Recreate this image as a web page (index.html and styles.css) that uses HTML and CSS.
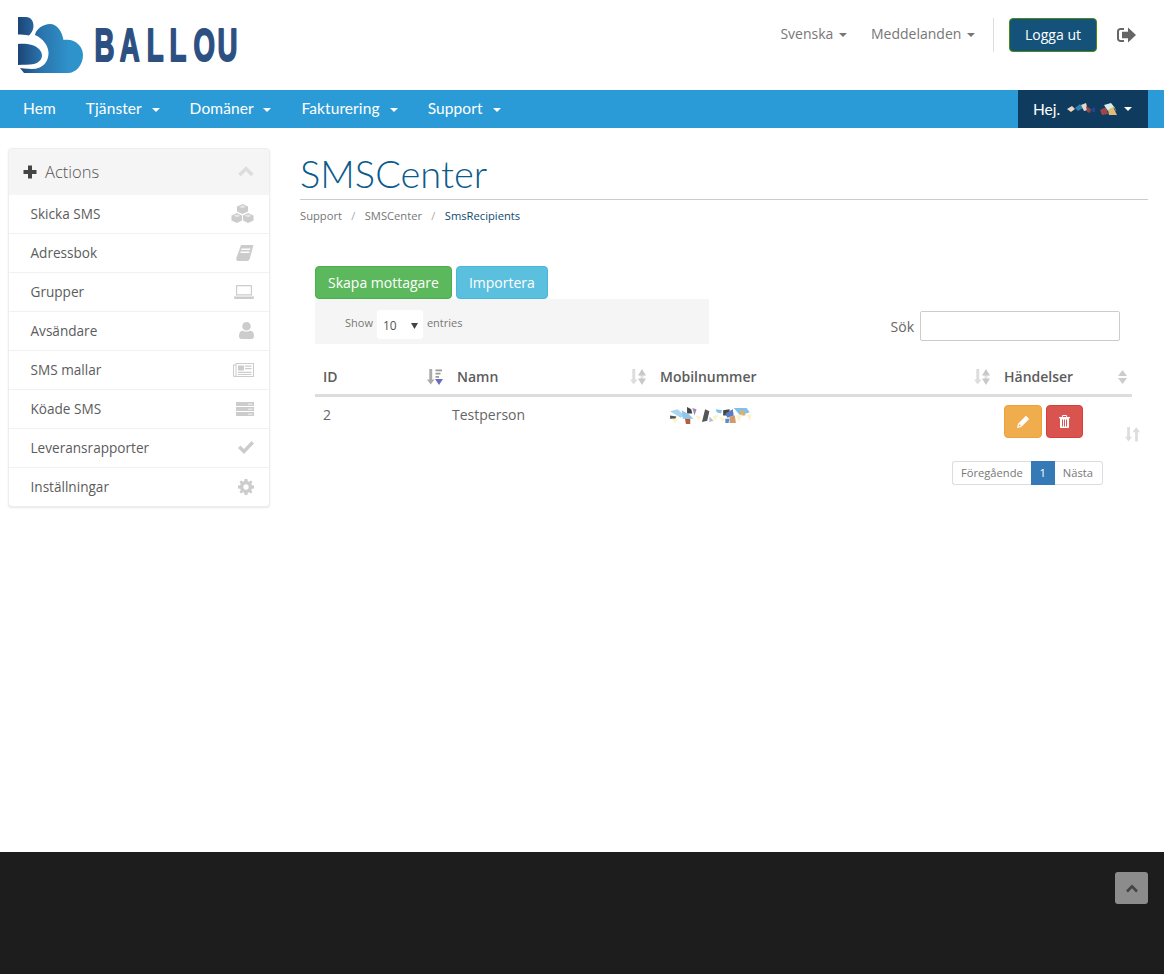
FILE: index.html
```html
<!DOCTYPE html>
<html lang="sv">
<head>
<meta charset="utf-8">
<title>SMSCenter</title>
<link rel="stylesheet" href="styles.css">
</head>
<body>
<header class="top">
  <a class="logo">
    <svg width="230" height="64" viewBox="0 0 230 64">
      <defs>
        <linearGradient id="lg" gradientUnits="userSpaceOnUse" x1="18" y1="0" x2="70" y2="0">
          <stop offset="0" stop-color="#1d4577"/><stop offset=".45" stop-color="#2a74ad"/><stop offset="1" stop-color="#2f93cb"/>
        </linearGradient>
      </defs>
      <g transform="translate(-16,-13)">
        <path fill="url(#lg)" d="M35 35C36 29 43 24 50 24C57 24 62 31 63.500 40C75 38 83 46 83 55C83 65 76 73 68 73H24L20 68L30 60Z"/>
        <path fill="#fff" d="M14 35H35C44 39 49 47 48.500 54C48 62 43 69 32 69C26 69 20 68 14 67Z"/>
        <path fill="url(#lg)" d="M18 17H26C31 17 33.500 21 33.500 26C33.500 30 31.500 33 29 35.500C25 34.800 21 34.500 18 34.500Z"/>
        <path fill="url(#lg)" d="M18 44C23 43.500 28 44 32 45C38 47 42 51 42 55.500C42 60 38 63 34 64C29 65 23 64.500 18 65Z"/>
      </g>
      <text class="logo-text" transform="translate(78.500,48) scale(.6,1)" x="0 42 87 125 165 205" y="0">BALLOU</text>
    </svg>
  </a>
  <nav class="top-nav">
    <a class="top-link">Svenska <i class="caret"></i></a>
    <a class="top-link">Meddelanden <i class="caret"></i></a>
    <span class="top-sep"></span>
    <a class="btn-logout">Logga ut</a>
    <svg class="signout" width="19" height="16" viewBox="0 0 19 16"><path fill="#666" d="M7 1V3H3.500C2.700 3 2 3.700 2 4.500V11.500C2 12.300 2.700 13 3.500 13H7V15H3.500C1.600 15 0 13.500 0 11.500V4.500C0 2.500 1.600 1 3.500 1ZM11 .5L19 8L11 15.500V11.300H5V4.700H11Z"/></svg>
  </nav>
</header>

<nav class="main-nav">
  <ul class="menu">
    <li>Hem</li>
    <li>Tjänster <i class="caret caret-w"></i></li>
    <li>Domäner <i class="caret caret-w"></i></li>
    <li>Fakturering <i class="caret caret-w"></i></li>
    <li>Support <i class="caret caret-w"></i></li>
  </ul>
  <div class="hello">
    <span>Hej.</span>
    <svg class="blur-a" width="52" height="14" viewBox="0 0 52 14">
      <polygon fill="#f0d6bd" points="0,7 5,4 8,7 4,10"/>
      <polygon fill="#2f7fb0" points="8,6 13,2 16,6 11,9"/>
      <polygon fill="#e8d8cc" points="14,3 19,1 21,8 17,9"/>
      <polygon fill="#8a4a4a" points="19,4 24,7 23,11 20,10"/>
      <polygon fill="#27418f" points="24,7 28,5 28,10 25,10"/>
      <polygon fill="#a0464a" points="33,8 39,5 41,12 35,13"/>
      <polygon fill="#d8eeea" points="37,3 44,1 48,6 41,9"/>
      <polygon fill="#e0bc78" points="41,8 46,5 50,13 42,13"/>
      <polygon fill="#777" points="46,5 49,7 49,10"/>
    </svg>
    <i class="caret caret-w"></i>
  </div>
</nav>

<main class="page">
  <aside class="side">
    <div class="side-head">
      <svg width="14" height="14" viewBox="0 0 14 14"><path fill="#444" d="M5 .5H9V5H13.500V9H9V13.500H5V9H.5V5H5Z"/></svg>
      <span class="side-title">Actions</span>
      <svg class="side-chev" width="16" height="11" viewBox="0 0 16 11"><path fill="none" stroke="#ddd" stroke-width="3.600" d="M1.500 9L8 2.800L14.500 9"/></svg>
    </div>
    <ul class="side-list">
      <li>Skicka SMS
        <svg width="23" height="19" viewBox="0 0 23 19"><g fill="#ccc"><path d="M11.500 0L17 2.500V7.500L11.500 10L6 7.500V2.500Z"/><path d="M6 9L11 11.500V16.500L6 19L.5 16.500V11.500Z"/><path d="M17 9L22.500 11.500V16.500L17 19L12 16.500V11.500Z"/></g><g fill="#e6e6e6"><path d="M11.500 1.200L15 2.800L11.500 4.300L8 2.800Z"/><path d="M6 10.200L9.500 11.800L6 13.300L2.500 11.800Z"/><path d="M17 10.200L20.500 11.800L17 13.300L13.500 11.800Z"/></g></svg></li>
      <li>Adressbok
        <svg width="18" height="16" viewBox="0 0 18 16"><path fill="#ccc" d="M5 0H17.500L14 13C13.700 15 12.500 16 11 16H2C.5 16 0 14.500 .3 13ZM5.500 3.500L5.200 5H14L14.400 3.500ZM4.700 6.500L4.400 8H13.200L13.600 6.500Z"/></svg></li>
      <li>Grupper
        <svg width="20" height="14" viewBox="0 0 20 14"><path fill="#ccc" d="M3 0H17C17.700 0 18 .4 18 1V10.500H2V1C2 .4 2.300 0 3 0ZM3.200 1.200V9.300H16.800V1.200ZM0 11.500H20V12.500C20 13.300 19.500 14 18.800 14H1.200C.5 14 0 13.300 0 12.500Z"/></svg></li>
      <li>Avsändare
        <svg width="15" height="17" viewBox="0 0 15 17"><path fill="#ccc" d="M7.500 0A4.300 4.300 0 1 1 7.500 8.600A4.300 4.300 0 1 1 7.500 0ZM3.500 8.500C5.500 10 9.500 10 11.500 8.500C13.800 9 15 11 15 14C15 16 14 17 12.500 17H2.500C1 17 0 16 0 14C0 11 1.200 9 3.500 8.500Z"/></svg></li>
      <li>SMS mallar
        <svg width="21" height="14" viewBox="0 0 21 14"><path fill="#ccc" fill-rule="evenodd" d="M0 1.500H2.500V0H21V14H1.500C.5 14 0 13.500 0 12.500ZM1 2.500V12.500C1 13 2.500 13 2.500 12.500V2.500ZM3.500 1V13H20V1ZM5 2.500H11V7.500H5ZM12 2.500H18.500V3.700H12ZM12 5H18.500V6.200H12ZM5 8.800H18.500V10H5ZM5 11H18.500V12H5Z"/></svg></li>
      <li>Köade SMS
        <svg width="18" height="14" viewBox="0 0 18 14"><path fill="#ccc" d="M0 0H18V4H0ZM0 5H18V9H0ZM0 10H18V14H0Z"/><path fill="#fff" d="M12 1.800H16.500V2.500H12ZM12 6.800H16.500V7.500H12ZM12 11.800H16.500V12.500H12Z"/></svg></li>
      <li>Leveransrapporter
        <svg width="16" height="13" viewBox="0 0 16 13"><path fill="#ccc" d="M0 7L2.500 4.500L6 8L13.500 0L16 2.500L6 13Z"/></svg></li>
      <li>Inställningar
        <svg width="16" height="16" viewBox="0 0 16 16"><path fill="#ccc" fill-rule="evenodd" d="M6.600 0H9.400L9.800 2.200L11.200 2.800L13 1.500L14.500 3L13.200 4.800L13.800 6.200L16 6.600V9.400L13.800 9.800L13.200 11.200L14.500 13L13 14.500L11.200 13.200L9.800 13.800L9.400 16H6.600L6.200 13.800L4.800 13.200L3 14.500L1.500 13L2.800 11.200L2.200 9.800L0 9.400V6.600L2.200 6.200L2.800 4.800L1.500 3L3 1.500L4.800 2.800L6.200 2.200ZM8 5.300A2.700 2.700 0 1 0 8 10.700A2.700 2.700 0 1 0 8 5.300Z"/></svg></li>
    </ul>
  </aside>

  <section class="content">
    <h1 class="title">SMSCenter</h1>
    <ol class="crumbs">
      <li>Support</li><li class="slash">/</li><li>SMSCenter</li><li class="slash">/</li><li class="cur">SmsRecipients</li>
    </ol>

    <div class="panel">
      <div class="actions">
        <a class="btn btn-green">Skapa mottagare</a>
        <a class="btn btn-blue">Importera</a>
      </div>
      <div class="filters">
        <div class="length">
          <span>Show</span>
          <span class="select">10<svg width="7" height="6" viewBox="0 0 7 6"><path fill="#444" d="M0 0H7L3.500 6Z"/></svg></span>
          <span>entries</span>
        </div>
        <label class="search">Sök <span class="input"></span></label>
      </div>

      <table class="grid">
        <colgroup><col class="c1"><col class="c2"><col class="c3"><col class="c4"></colgroup>
        <thead>
          <tr>
            <th class="th1"><div class="th-in">ID
              <svg width="16" height="16" viewBox="0 0 16 16"><path fill="#aaa" d="M2.300 0H5.200V10.500H7.500L3.700 15.500L0 10.500H2.300Z"/><path fill="#999" d="M8.500 .5H15V2.300H8.500ZM8.500 3.700H13.500V5.500H8.500ZM8.500 7H12V8.800H8.500Z"/><path fill="#6a6cc4" d="M8 10H16L12 16Z"/></svg></div></th>
            <th class="th2"><div class="th-in">Namn
              <svg width="16" height="16" viewBox="0 0 16 16"><path fill="#ddd" d="M2.300 0H5.200V10.500H7.500L3.700 15.500L0 10.500H2.300Z"/><path fill="#e4e4e4" d="M10.500 5H13.500V11H10.500Z"/><path fill="#c8c8c8" d="M12 0L16 6.500H8ZM8 9.500H16L12 16Z"/></svg></div></th>
            <th class="th3"><div class="th-in">Mobilnummer
              <svg width="16" height="16" viewBox="0 0 16 16"><path fill="#ddd" d="M2.300 0H5.200V10.500H7.500L3.700 15.500L0 10.500H2.300Z"/><path fill="#e4e4e4" d="M10.500 5H13.500V11H10.500Z"/><path fill="#c8c8c8" d="M12 0L16 6.500H8ZM8 9.500H16L12 16Z"/></svg></div></th>
            <th class="th4"><div class="th-in">Händelser
              <svg width="9" height="14" viewBox="0 0 9 14"><path fill="#ccc" d="M4.500 0L9 6H0ZM0 8H9L4.500 14Z"/></svg></div></th>
          </tr>
        </thead>
        <tbody>
          <tr>
            <td>2</td>
            <td>Testperson</td>
            <td class="td-num">
              <svg class="blur-b" width="84" height="17" viewBox="0 0 79 16">
                <polygon fill="#a9d6f2" points="0,4 7,2 14,8 10,10"/>
                <polygon fill="#555" points="0,8 6,9 5,11 0,11"/>
                <polygon fill="#fdf3c4" points="2,11 8,11 4,15"/>
                <polygon fill="#444" points="16,0 20,2 21,6 16,6"/>
                <polygon fill="#8fc6ee" points="11,3 18,7 22,11 12,11"/>
                <polygon fill="#a08ac0" points="21,1 25,2 23,8"/>
                <polygon fill="#b0603c" points="14,11 19,11 19,16 15,16"/>
                <polygon fill="#fdf3c4" points="24,8 29,9 27,13"/>
                <polygon fill="#555" points="33,2 37,4 35,13 30,14"/>
                <polygon fill="#b4bfd0" points="37,9 41,13 37,14"/>
                <polygon fill="#fdf3c4" points="40,9 46,7 42,13"/>
                <polygon fill="#7fc0ee" points="43,2 49,3 48,6 44,5"/>
                <polygon fill="#444" points="50,3 56,2 56,8 50,8"/>
                <polygon fill="#5a7cc0" points="52,6 59,2 60,8 54,10"/>
                <polygon fill="#fdf3c4" points="46,9 52,11 49,14"/>
                <polygon fill="#5a8cd0" points="52,11 56,11 55,15 52,15"/>
                <polygon fill="#d09a70" points="56,9 61,8 62,15 56,15"/>
                <polygon fill="#7fc0ee" points="60,1 72,1 75,5 66,8"/>
                <polygon fill="#d8b070" points="66,3 70,3 71,8 66,8"/>
                <polygon fill="#fdf3c4" points="62,8 68,7 65,14"/>
                <polygon fill="#fdf3c4" points="72,7 77,7 75,13"/>
              </svg>
            </td>
            <td class="td-act">
              <a class="act act-edit"><svg width="13" height="13" viewBox="0 0 13 13"><path fill="#fff" d="M9 0.800L12.200 4L4.200 12L0 13L1 8.800ZM2 9.500L1.500 11.500L3.500 11L3.300 9.700Z"/></svg></a>
              <a class="act act-del"><svg width="11" height="13" viewBox="0 0 11 13"><path fill="#fff" fill-rule="evenodd" d="M3.500 0H7.500L8.300 2H11V3.200H10V12C10 12.600 9.500 13 9 13H2C1.500 13 1 12.600 1 12V3.200H0V2H2.700ZM4 1L3.700 2H7.300L7 1ZM3 4.500V11.500H4V4.500ZM5 4.500V11.500H6V4.500ZM7 4.500V11.500H8V4.500Z"/></svg></a>
            </td>
          </tr>
        </tbody>
      </table>
      <svg class="stray-sort" width="15" height="15" viewBox="0 0 16 16"><path fill="#ddd" d="M2.300 0H5.200V10.500H7.500L3.700 15.500L0 10.500H2.300Z"/><path fill="#ddd" d="M12 0L16 5.500H13.700V15.500H10.800V5.500H8Z"/></svg>

      <div class="pager-row">
        <div class="pager">
          <a class="pg">Föregående</a><a class="pg pg-on">1</a><a class="pg">Nästa</a>
        </div>
      </div>
    </div>
  </section>
</main>

<footer class="foot">
  <a class="to-top"><svg width="12" height="9" viewBox="0 0 12 9"><path fill="none" stroke="#444" stroke-width="2.600" d="M1 7.500L6 2.300L11 7.500"/></svg></a>
</footer>
</body>
</html>
```

FILE: styles.css
```css
* { box-sizing: border-box; }
html, body { margin: 0; padding: 0; }
body {
  min-height: 974px;
  display: flex;
  flex-direction: column;
  font-family: "Open Sans", "Liberation Sans", sans-serif;
  font-size: 14px;
  color: #555;
  background: #fff;
}
ul, ol { list-style: none; margin: 0; padding: 0; }

/* header */
.top { height: 90px; display: flex; justify-content: space-between; padding: 13px 16px 0 16px; }
.logo { display: block; height: 64px; }
.logo svg { display: block; }
.logo-text { font-family: "Liberation Sans", sans-serif; font-weight: 700; font-size: 46px; fill: #2d5082; stroke: #2d5082; stroke-width: 2px; stroke-linejoin: round; }
.top-nav { display: flex; align-items: flex-start; padding-top: 5px; }
.top-link { color: #777; line-height: 32px; margin-right: 24px; white-space: nowrap; }
.top-link:nth-child(2) { margin-right: 18px; }
.top-sep { width: 1px; height: 34px; background: #ddd; margin-right: 15px; }
.btn-logout { width: 88px; height: 34px; line-height: 31px; text-align: center; color: #fff; background: #15527a; border: 1px solid #4c8a12; border-radius: 4px; }
.signout { margin: 9px 12px 0 20px; }
.caret { display: inline-block; width: 0; height: 0; margin-left: 2px; vertical-align: middle; border-top: 4px solid #777; border-left: 4px solid transparent; border-right: 4px solid transparent; }
.caret-w { border-top-color: #fff; }

/* main nav */
.main-nav { height: 38px; background: #2a9bd6; display: flex; justify-content: space-between; padding: 0 16px 0 8px; color: #fff; font-family: Lato, "Liberation Sans", sans-serif; font-size: 15.500px; }
.menu { display: flex; }
.menu li { padding: 0 15px; line-height: 36px; white-space: nowrap; letter-spacing: .1px; }
.menu .caret { margin-left: 6px; }
.hello { width: 130px; background: #0e3b5e; display: flex; align-items: center; padding-left: 15px; padding-bottom: 1px; }
.blur-a { margin-left: 7px; filter: blur(.4px); }
.hello .caret { margin-left: 5px; }

/* page */
.page { flex: 1; display: flex; align-items: flex-start; padding: 20px 16px 0 8px; }
.side { width: 262px; flex: none; border: 1px solid #eee; border-radius: 4px; box-shadow: 0 1px 2px rgba(0,0,0,.1); background: #fff; overflow: hidden; }
.side-head { height: 46px; background: #f5f5f5; display: flex; align-items: center; padding: 0 15px 1px 14px; }
.side-title { margin-left: 8px; font-size: 16.500px; font-weight: 300; color: #555; }
.side-chev { margin-left: auto; }
.side-list li { height: 39px; display: flex; align-items: center; justify-content: space-between; padding: 0 15px 2px 21.500px; border-bottom: 1px solid #f1f1f1; color: #5c5c5c; font-size: 13.600px; }
.side-list li:last-child { height: 38px; border-bottom: 0; }
.side-list svg { margin-top: 1px; }

.content { flex: 1; margin-left: 30px; min-width: 0; }
.title { margin: 0; height: 52px; padding-top: 3px; line-height: 44px; font-family: Lato, "Liberation Sans", sans-serif; font-size: 38px; font-weight: 300; color: #0b5b8c; border-bottom: 1px solid #ccc; }
.crumbs { display: flex; margin-top: 8px; font-size: 11.200px; line-height: 15px; color: #777; }
.crumbs .slash { margin: 0 9.300px; color: #aaa; }
.crumbs .cur { color: #0f4a70; }

.panel { position: relative; margin: 43px 16px 0 15px; }
.actions { display: flex; gap: 4px; }
.btn { height: 33px; line-height: 31px; padding: 0 12px; color: #fff; border-radius: 4px; border: 1px solid; }
.btn-green { background: #5cb85c; border-color: #4cae4c; }
.btn-blue { background: #5bc0de; border-color: #46b8da; }
.filters { display: flex; justify-content: space-between; align-items: flex-start; }
.length { width: 394px; height: 45px; background: #f5f5f5; display: flex; align-items: flex-start; padding: 11px 0 0 30px; font-size: 11px; line-height: 26px; color: #777; gap: 4px; }
.select { width: 46px; height: 29px; background: #fff; border-radius: 3px; display: flex; align-items: center; justify-content: space-between; padding: 2px 5px 0 6px; font-size: 12px; color: #555; }
.search { display: flex; align-items: center; margin: 12px 12px 0 0; color: #666; gap: 6px; }
.input { display: block; width: 200px; height: 30px; border: 1px solid #ccc; border-radius: 2px; background: #fff; }

.grid { width: 100%; table-layout: fixed; border-collapse: collapse; margin-top: 16px; }
.c1 { width: 129px; } .c2 { width: 208px; } .c3 { width: 344px; } .c4 { width: 136px; }
.grid th { height: 35px; padding: 0 6px 0 8px; border-bottom: 3px solid #ddd; text-align: left; font-weight: 600; color: #5c5c5c; }
.grid .th1 { padding-right: 1px; }
.grid .th2 { padding-left: 13px; }
.grid .th4 { padding-right: 5px; }
.th-in { display: flex; justify-content: space-between; align-items: center; }
.grid td { height: 51px; padding: 8px; vertical-align: top; color: #666; }
.grid .td-num { padding: 10px 0 0 18px; }
.blur-b { filter: blur(.6px); }
.grid .td-act { padding-right: 0; }
.td-act { display: flex; gap: 4px; }
.act { display: flex; align-items: center; justify-content: center; height: 33px; border-radius: 4px; border: 1px solid; }
.act-edit { width: 38px; background: #f0ad4e; border-color: #eea236; }
.act-del { width: 37px; background: #d9534f; border-color: #d43f3a; }
.stray-sort { position: absolute; right: -8px; top: 161px; }

.pager-row { display: flex; justify-content: flex-end; padding: 13px 29px 0 0; }
.pager { display: flex; font-size: 11.200px; height: 24px; line-height: 22px; color: #777; }
.pg { padding: 0 8px; border: 1px solid #ddd; background: #fff; }
.pg:first-child { border-radius: 3px 0 0 3px; border-right: 0; }
.pg:last-child { border-radius: 0 3px 3px 0; border-left: 0; padding-right: 9px; }
.pg-on { width: 24px; padding: 0; text-align: center; color: #fff; background: #337ab7; border-color: #337ab7; }

/* footer */
.foot { height: 122px; background: #1d1d1d; display: flex; justify-content: flex-end; padding: 20px 16px 0 0; }
.to-top { width: 33px; height: 32px; border-radius: 3px; background: #8c8c8c; display: flex; align-items: center; justify-content: center; }
```
